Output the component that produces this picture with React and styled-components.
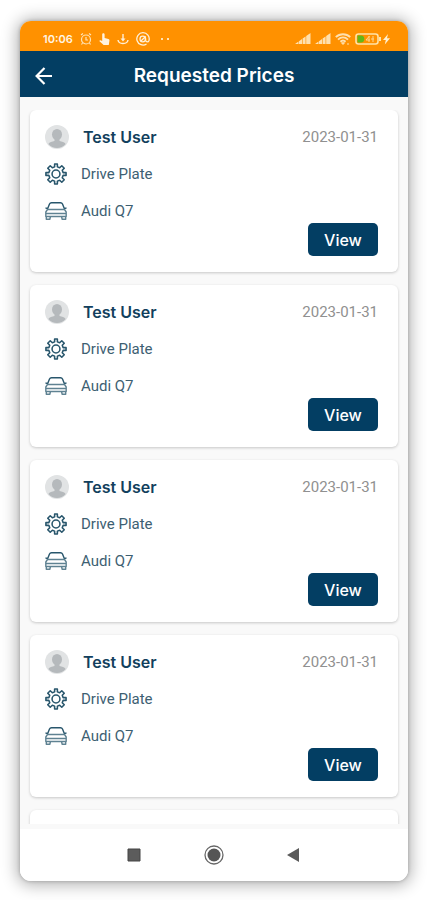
import React from 'react';
import styled, { createGlobalStyle } from 'styled-components';

const requests = [1, 2, 3, 4].map((id) => ({
	id,
	user: 'Test User',
	date: '2023-01-31',
	part: 'Drive Plate',
	car: 'Audi Q7',
}));

const AlarmIcon = () => (
	<svg width='12' height='12' viewBox='0 0 12 12' fill='none' stroke='#ffe3b5' strokeWidth='1.2'>
		<circle cx='6' cy='6.5' r='4.5' />
		<path d='M6 4v3h2M1 2l2-1.5M11 2L9 .5M2.5 10l-1 1.5M9.5 10l1 1.5' />
	</svg>
);

const TouchIcon = () => (
	<svg width='11' height='12' viewBox='0 0 11 12' fill='#fff3df'>
		<path d='M3.2 1.5c0-1.6 2.4-1.6 2.4 0V5l3.8 1c1 .3 1.2.9 1 1.8L9.8 12H4.6L.5 8.3c-.4-.6.3-1.3 1-1l1.7.8z' />
	</svg>
);

const AnchorIcon = () => (
	<svg width='12' height='12' viewBox='0 0 12 12' fill='none' stroke='#fff0d8' strokeWidth='1.4'>
		<path d='M6 1v6M1 7c.6 4.6 9.4 4.6 10 0' />
		<path d='M3.5 5.5h5L6 8.5z' fill='#fff0d8' stroke='none' />
	</svg>
);

const AtIcon = () => (
	<svg width='14' height='14' viewBox='0 0 14 14' fill='none' stroke='#fff0d8' strokeWidth='1.3'>
		<path d='M10.5 12A6.2 6.2 0 1 1 13 8.5c-.6 2-3 1.8-3.3.2L8.8 4.3' />
		<circle cx='6.8' cy='7' r='2.8' />
		<path d='M4.5 9.5l5-5' />
	</svg>
);

const SignalIcon = () => (
	<svg width='16' height='12' viewBox='0 0 16 12' fill='#ffe0ad'>
		<path d='M0 11l3.5-2.5V11zM4 8.2l3-2.2v5H4zM7.6 5.6l3-2.2V11h-3zM11.2 3L15.5 0v11h-4.3z' />
	</svg>
);

const WifiIcon = () => (
	<svg width='16' height='12' viewBox='0 0 16 12' fill='none' stroke='#ffe0ad' strokeWidth='1.9'>
		<path d='M.8 4.2c4-4 10.4-4 14.4 0M3 6.6c3-2.8 7-2.8 10 0M5.4 8.8c1.5-1.4 3.7-1.4 5.2 0' />
		<path d='M6.5 9.8L8 11.5l1.5-1.7zM12 11h2' strokeWidth='1' fill='#ffe0ad' />
	</svg>
);

const BatteryIcon = () => (
	<svg width='35' height='12' viewBox='0 0 35 12'>
		<rect x='1' y='1' width='22' height='10' rx='2.5' fill='none' stroke='#ffe3a8' strokeWidth='1.6' />
		<path d='M2.5 2.5H6c4.5 0 4.5 7 0 7H2.5z' fill='#62b719' />
		<path d='M24 4h2v4h-2z' fill='#ffe3a8' />
		<path d='M14.5 3L11 7h4M14 3v6M18 3v6M16 6h3' fill='none' stroke='#ffd68f' />
		<path d='M33 1l-5 6h2.8l-1 4.5L35 5.3h-3z' fill='#fff0d0' />
	</svg>
);

const BackIcon = () => (
	<svg width='18' height='18' viewBox='0 0 18 18' fill='none' stroke='#fff' strokeWidth='2.2'>
		<path d='M17 9H2M9.5 1L1.6 9l7.9 8' />
	</svg>
);

const AvatarIcon = () => (
	<svg width='24' height='24' viewBox='0 0 24 24'>
		<circle cx='12' cy='12' r='12' fill='#e1e3e4' />
		<ellipse cx='12' cy='9.5' rx='5' ry='5.5' fill='#b5b9bc' />
		<path d='M9.5 13h5v3c2.500.5 5 1.200 6.200 3C18.500 21.500 15.500 23 12 23s-6.500-1.500-8.700-4c1.200-1.800 3.700-2.500 6.200-3z' fill='#b5b9bc' />
	</svg>
);

const GearIcon = () => (
	<svg width='22' height='22' viewBox='0 0 24 24' fill='none' stroke='#28566c' strokeWidth='1.7' strokeLinejoin='round'>
		<path d='M10.5 1h3v3.2l2.5 1L18.3 3 21 5.7 18.8 8l1 2.5H23v3h-3.2l-1 2.5 2.2 2.3-2.7 2.7-2.3-2.2-2.5 1V23h-3v-3.2l-2.5-1L5.7 21 3 18.3 5.2 16l-1-2.5H1v-3h3.2l1-2.5L3 5.700 5.700 3 8 5.200l2.500-1z' />
		<circle cx='12' cy='12' r='4.3' />
	</svg>
);

const CarIcon = () => (
	<svg width='22' height='18' viewBox='0 0 22 18' fill='none' stroke='#5f8292' strokeWidth='1.4' strokeLinejoin='round'>
		<path d='M2.500 7L4.500 2C4.900 1.100 5.500.8 6.500.8h9c1 0 1.600.3 2 1.200l2 5M.5 5.800l2 .8M21.500 5.800l-2 .8' stroke='#28566c' />
		<path d='M2.500 7.500h17l1.700 2.500v4.500H.8V10zM1.300 14.500v2.700h3.500l.7-2.700M20.700 14.500v2.700h-3.500l-.7-2.700M1 11.500h20' />
	</svg>
);

const RequestCard = ({ request }) => {
	return (
		<Card>
			<Row>
				<AvatarIcon />
				<UserName>{request.user}</UserName>
				<RequestDate dateTime={request.date}>{request.date}</RequestDate>
			</Row>
			<Row>
				<GearIcon />
				<Detail>{request.part}</Detail>
			</Row>
			<Row>
				<CarIcon />
				<Detail>{request.car}</Detail>
			</Row>
			<ViewButton type='button'>View</ViewButton>
		</Card>
	);
};

const App = () => {
	return (
		<Page>
			<GlobalStyle />
			<Phone>
				<StatusBar>
					<StatusGroup $gap='7px'>
						<Clock>10:06</Clock>
						<AlarmIcon />
						<TouchIcon />
						<AnchorIcon />
						<AtIcon />
						<Dots>
							<Dot />
							<Dot />
						</Dots>
					</StatusGroup>
					<StatusGroup $gap='4px'>
						<SignalIcon />
						<SignalIcon />
						<WifiIcon />
						<BatteryIcon />
					</StatusGroup>
				</StatusBar>
				<Header>
					<BackButton type='button' aria-label='Back'>
						<BackIcon />
					</BackButton>
					<Title>Requested Prices</Title>
				</Header>
				<Body>
					<List>
						{requests.map((request) => (
							<RequestCard key={request.id} request={request} />
						))}
						<Card />
					</List>
				</Body>
				<NavBar>
					<NavButton type='button' aria-label='Recent apps'>
						<svg width='20' height='20' viewBox='0 0 20 20'>
							<path d='M4 4h12v12H4z' fill='#5c5c5c' stroke='#444' />
						</svg>
					</NavButton>
					<NavButton type='button' aria-label='Home'>
						<svg width='20' height='20' viewBox='0 0 20 20'>
							<circle cx='10' cy='10' r='9' fill='none' stroke='#686868' strokeWidth='1.3' />
							<circle cx='10' cy='10' r='6.5' fill='#555' />
						</svg>
					</NavButton>
					<NavButton type='button' aria-label='Back'>
						<svg width='20' height='20' viewBox='0 0 20 20'>
							<path d='M15 3v14L3 10z' fill='#5a5a5a' />
						</svg>
					</NavButton>
				</NavBar>
			</Phone>
		</Page>
	);
};

const GlobalStyle = createGlobalStyle`
	* {
		box-sizing: border-box;
	}

	body {
		margin: 0;
		background: #fff;
		font-family: Roboto, 'Liberation Sans', sans-serif;
	}

	button {
		border: none;
		padding: 0;
		cursor: pointer;
	}

	svg {
		display: block;
		flex-shrink: 0;
	}
`;

const Page = styled.div`
	display: flex;
	height: 100vh;
	padding: 21px 19px 19px 20px;
`;

const Phone = styled.main`
	display: flex;
	flex-direction: column;
	flex: 1;
	min-width: 0;
	overflow: hidden;
	border-radius: 11px;
	background: #fff;
	box-shadow: 0 0 3px 1px rgba(0, 0, 0, 0.14), 0 1px 16px 3px rgba(0, 0, 0, 0.3);
`;

const StatusBar = styled.div`
	display: flex;
	justify-content: space-between;
	align-items: center;
	height: 30px;
	flex-shrink: 0;
	padding: 6px 18px 0 23px;
	background: #ff9100;
`;

const StatusGroup = styled.div`
	display: flex;
	align-items: center;
	gap: ${({ $gap }) => $gap};
`;

const Clock = styled.span`
	color: #fff5e5;
	font-family: Inter, sans-serif;
	font-size: 11px;
	font-weight: 600;
	line-height: 14px;
`;

const Dots = styled.span`
	display: flex;
	gap: 4px;
	padding-left: 4px;
`;

const Dot = styled.span`
	width: 2px;
	height: 2px;
	background: #ffe3b5;
`;

const Header = styled.header`
	display: grid;
	grid-template-columns: 48px 1fr 48px;
	align-items: center;
	height: 46px;
	flex-shrink: 0;
	padding-top: 4px;
	background: #033e63;
`;

const BackButton = styled.button`
	display: flex;
	justify-content: center;
	align-items: center;
	height: 40px;
	background: none;
`;

const Title = styled.h1`
	margin: 0;
	color: #fff;
	font-family: Inter, sans-serif;
	font-size: 19px;
	font-weight: 600;
	line-height: 24px;
	text-align: center;
`;

const Body = styled.div`
	flex: 1;
	min-height: 0;
	padding: 13px 10px 5px;
	background: #f9f9f9;
`;

const List = styled.div`
	display: flex;
	flex-direction: column;
	gap: 13px;
	height: 100%;
	margin: 0 -4px;
	padding: 0 4px;
	overflow: hidden;
`;

const Card = styled.article`
	display: flex;
	flex-direction: column;
	flex-shrink: 0;
	gap: 13px;
	padding: 15px 20px 16px 15px;
	border-radius: 6px;
	background: #fff;
	box-shadow: 0 1px 3px rgba(0, 0, 0, 0.2);
`;

const Row = styled.div`
	display: flex;
	align-items: center;
	gap: 14px;
	height: 24px;
`;

const UserName = styled.h2`
	margin: 0;
	color: #123f5d;
	font-family: Inter, sans-serif;
	font-size: 16px;
	font-weight: 600;
	line-height: 24px;
`;

const RequestDate = styled.time`
	margin-left: auto;
	color: #909090;
	font-size: 15px;
	line-height: 24px;
`;

const Detail = styled.span`
	color: #3d6072;
	font-size: 15px;
	line-height: 24px;
`;

const ViewButton = styled.button`
	align-self: flex-end;
	width: 70px;
	height: 33px;
	margin-top: -13px;
	border-radius: 5px;
	background: #033e63;
	color: #fff;
	font-family: Inter, sans-serif;
	font-size: 16px;
	font-weight: 500;
	line-height: 24px;
`;

const NavBar = styled.nav`
	display: flex;
	justify-content: center;
	align-items: center;
	gap: 60px;
	height: 52px;
	flex-shrink: 0;
	background: #fff;
`;

const NavButton = styled.button`
	background: none;
`;

export default App;
